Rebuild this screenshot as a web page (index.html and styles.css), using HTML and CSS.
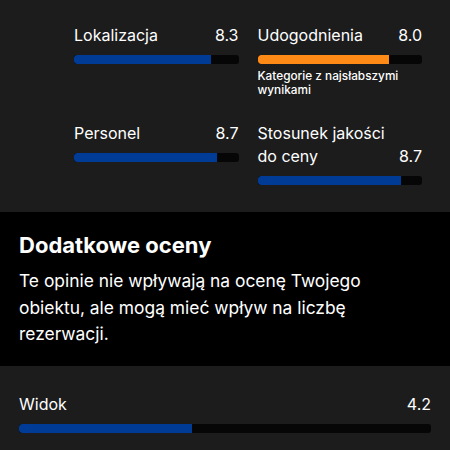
FILE: index.html
```html
<!DOCTYPE html>
<html lang="pl">
<head>
<meta charset="utf-8">
<title>Oceny obiektu</title>
<link rel="stylesheet" href="styles.css">
</head>
<body>
  <section class="scores">
    <div class="score">
      <div class="score-head"><span class="score-name">Lokalizacja</span><span class="score-value">8.3</span></div>
      <div class="bar"><div class="bar-fill" style="width: 83%"></div></div>
    </div>
    <div class="score">
      <div class="score-head"><span class="score-name">Udogodnienia</span><span class="score-value">8.0</span></div>
      <div class="bar"><div class="bar-fill bar-fill--weak" style="width: 80%"></div></div>
      <p class="score-note">Kategorie z najsłabszymi wynikami</p>
    </div>
    <div class="score">
      <div class="score-head"><span class="score-name">Personel</span><span class="score-value">8.7</span></div>
      <div class="bar"><div class="bar-fill" style="width: 87%"></div></div>
    </div>
    <div class="score">
      <div class="score-head"><span class="score-name">Stosunek jakości do ceny</span><span class="score-value">8.7</span></div>
      <div class="bar"><div class="bar-fill" style="width: 87%"></div></div>
    </div>
  </section>

  <section class="extra">
    <h2 class="extra-title">Dodatkowe oceny</h2>
    <p class="extra-text">Te opinie nie wpływają na ocenę Twojego obiektu, ale mogą mieć wpływ na liczbę rezerwacji.</p>
  </section>

  <section class="extra-scores">
    <div class="score">
      <div class="score-head"><span class="score-name">Widok</span><span class="score-value">4.2</span></div>
      <div class="bar"><div class="bar-fill" style="width: 42%"></div></div>
    </div>
  </section>
</body>
</html>
```

FILE: styles.css
```css
* {
  box-sizing: border-box;
}

html, body {
  margin: 0;
  padding: 0;
}

body {
  background: #1c1c1c;
  color: #ffffff;
  font-family: Inter, "Noto Sans", "Liberation Sans", sans-serif;
  -webkit-font-smoothing: antialiased;
}

/* main category scores, two columns */
.scores {
  display: grid;
  grid-template-columns: 1fr 1fr;
  column-gap: 19px;
  row-gap: 25px;
  padding: 24px 28px 27px 74px;
}

.score-head {
  display: flex;
  justify-content: space-between;
  align-items: flex-end;
  gap: 8px;
  font-size: 16px;
  line-height: 23px;
  font-weight: 400;
}

.score-name {
  flex: 1;
}

.score-value {
  flex: none;
}

.bar {
  margin-top: 8px;
  height: 9px;
  background: #060606;
  border-radius: 3px;
  overflow: hidden;
}

.bar-fill {
  height: 100%;
  background: #003b95;
  border-radius: 3px 0 0 3px;
}

.bar-fill--weak {
  background: #ff8a16;
}

.score-note {
  margin: 5px 0 0;
  font-size: 11.8px;
  line-height: 14px;
  font-weight: 500;
  max-width: 150px;
}

/* additional ratings intro */
.extra {
  background: #000000;
  padding: 20px 19px 18px;
}

.extra-title {
  margin: 0;
  font-size: 22px;
  line-height: 27px;
  font-weight: 700;
}

.extra-text {
  margin: 9px 0 0;
  max-width: 385px;
  font-size: 17.4px;
  line-height: 26.5px;
  font-weight: 400;
}

.extra-scores {
  padding: 27px 19px 20px;
}
```
